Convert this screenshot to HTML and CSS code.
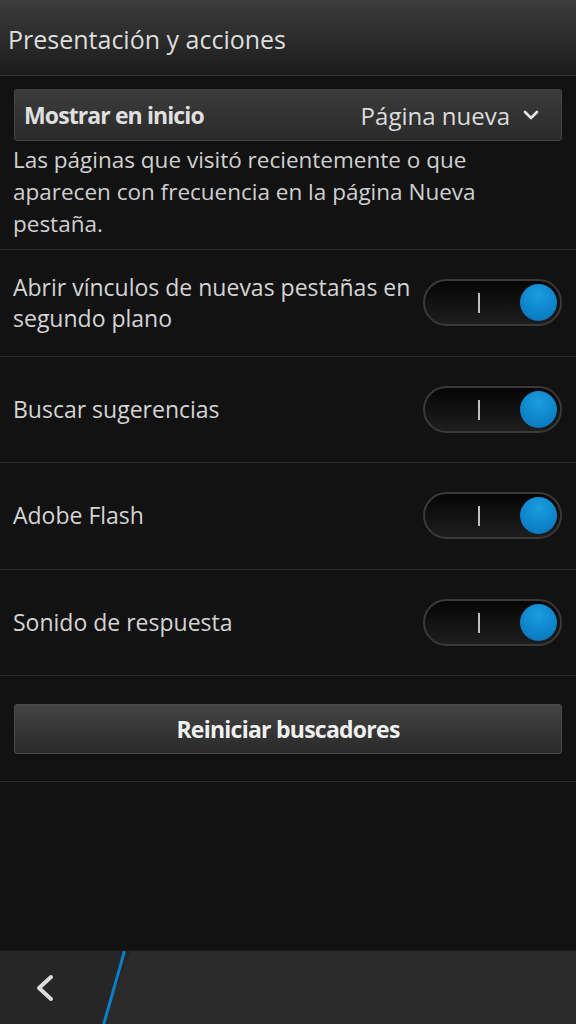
FILE: index.html
```html
<!DOCTYPE html>
<html lang="es">

<head>
    <meta charset="UTF-8">
    <title>Presentación y acciones</title>
    <link rel="stylesheet" href="styles.css">
</head>

<body>

    <header class="titlebar">
        <h1>Presentación y acciones</h1>
    </header>

    <main class="content">
        <div class="dropdown">
            <span class="dropdown-label">Mostrar en inicio</span>
            <span class="dropdown-value">Página nueva
                <svg class="chevron" width="16" height="10" viewBox="0 0 16 10">
                    <path d="M2 2 L8 8 L14 2" fill="none" stroke="#e6e6e6" stroke-width="2.6" stroke-linecap="round" stroke-linejoin="round" />
                </svg>
            </span>
        </div>
        <p class="hint">Las páginas que visitó recientemente o que aparecen con frecuencia en la página Nueva pestaña.</p>

        <div class="row">
            <span class="row-label">Abrir vínculos de nuevas pestañas en segundo plano</span>
            <div class="toggle"><span class="toggle-bar"></span><span class="toggle-knob"></span></div>
        </div>
        <div class="row">
            <span class="row-label">Buscar sugerencias</span>
            <div class="toggle"><span class="toggle-bar"></span><span class="toggle-knob"></span></div>
        </div>
        <div class="row">
            <span class="row-label">Adobe Flash</span>
            <div class="toggle"><span class="toggle-bar"></span><span class="toggle-knob"></span></div>
        </div>
        <div class="row">
            <span class="row-label">Sonido de respuesta</span>
            <div class="toggle"><span class="toggle-bar"></span><span class="toggle-knob"></span></div>
        </div>

        <div class="button-row">
            <button class="button">Reiniciar buscadores</button>
        </div>
    </main>

    <footer class="actionbar">
        <div class="back">
            <svg width="24" height="30" viewBox="0 0 24 30">
                <path d="M18 4 L6 15 L18 26" fill="none" stroke="#dcdcdc" stroke-width="4" stroke-linecap="round" stroke-linejoin="round" />
            </svg>
        </div>
        <svg class="divider" width="30" height="74" viewBox="0 0 30 74">
            <polygon points="0,74 30,0 30,74" fill="#2b2b2b" />
            <line x1="23.5" y1="0" x2="2.5" y2="74" stroke="#0a7fc8" stroke-width="3" />
        </svg>
        <div class="actionbar-rest"></div>
    </footer>

</body>

</html>
```

FILE: styles.css
```css
* {
    margin: 0;
    padding: 0;
    box-sizing: border-box;
}

html,
body {
    height: 100%;
}

body {
    font-family: 'Open Sans', 'Noto Sans', sans-serif;
    background: #121212;
    color: #d4d4d4;
    display: flex;
    flex-direction: column;
}

.titlebar {
    height: 76px;
    padding: 0 8px;
    display: flex;
    align-items: center;
    background: linear-gradient(#3c3c3c, #1c1c1c);
    border-bottom: 1px solid #333;
}

.titlebar h1 {
    font-size: 25px;
    font-weight: 400;
    color: #dedede;
    margin-top: 2px;
}

.content {
    flex: 1;
}

.dropdown {
    margin: 13px 14px 0;
    height: 52px;
    padding: 0 22px 0 9px;
    display: flex;
    justify-content: space-between;
    align-items: center;
    background: linear-gradient(#3c3c3c, #2a2a2a);
    border: 1px solid #454545;
    border-radius: 3px;
}

.dropdown-label {
    font-size: 23px;
    font-weight: 700;
    letter-spacing: -0.9px;
    color: #e0e0e0;
}

.dropdown-value {
    display: flex;
    align-items: center;
    gap: 13px;
    font-size: 24px;
    color: #dcdcdc;
}

.hint {
    padding: 3px 13px 9px;
    font-size: 22.5px;
    line-height: 32px;
    color: #d0d0d0;
    border-bottom: 1px solid #2a2a2a;
}

.row {
    height: 106.5px;
    padding: 0 14px 0 13px;
    display: flex;
    align-items: center;
    justify-content: space-between;
    gap: 12px;
    border-bottom: 1px solid #2a2a2a;
}

.row-label {
    font-size: 23px;
    line-height: 31px;
    color: #d4d4d4;
    max-width: 410px;
}

.toggle {
    position: relative;
    flex: none;
    width: 139px;
    height: 47px;
    border-radius: 24px;
    border: 2px solid #3a3a3a;
    background: linear-gradient(#050505, #1e1e1e);
    display: flex;
    align-items: center;
    justify-content: flex-end;
    padding-right: 3px;
}

.toggle-bar {
    position: absolute;
    left: 53px;
    top: 12px;
    width: 2px;
    height: 20px;
    background: #c0c0c0;
}

.toggle-knob {
    width: 37px;
    height: 37px;
    border-radius: 50%;
    background: radial-gradient(circle at 50% 30%, #1a9ee0, #0670b8);
}

.button-row {
    padding: 28px 14px 27px;
    border-bottom: 1px solid #2a2a2a;
}

.button {
    width: 100%;
    height: 50px;
    font-family: inherit;
    font-size: 23px;
    font-weight: 700;
    letter-spacing: -0.75px;
    color: #f0f0f0;
    background: linear-gradient(#434343, #2a2a2a);
    border: 1px solid #4a4a4a;
    border-radius: 3px;
}

.actionbar {
    height: 74px;
    display: flex;
    background: #262626;
    border-top: 1px solid #1a1a1a;
}

.back {
    width: 101px;
    display: flex;
    align-items: center;
    justify-content: center;
    padding-right: 12px;
}

.divider {
    flex: none;
    display: block;
}

.actionbar-rest {
    flex: 1;
    background: #2b2b2b;
}
```
